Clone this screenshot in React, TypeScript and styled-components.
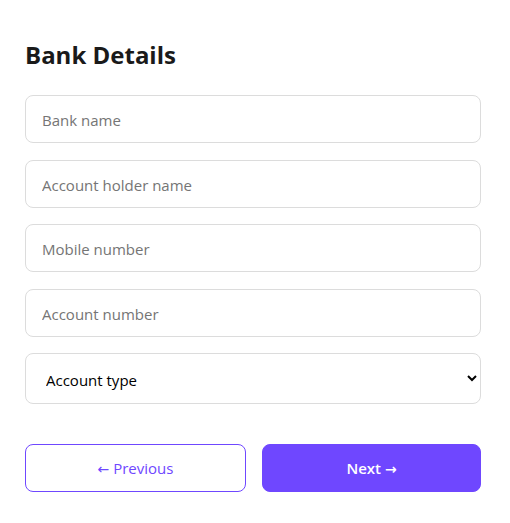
import React from 'react';
import styled, { createGlobalStyle } from 'styled-components';

const GlobalStyle = createGlobalStyle`
  body {
    margin: 0;
    background: #ffffff;
    font-family: "Open Sans", "Noto Sans", sans-serif;
  }
`;

const fields = ['Bank name', 'Account holder name', 'Mobile number', 'Account number'];

const App: React.FC = () => {
  return (
    <>
      <GlobalStyle />
      <Page>
        <Title>Bank Details</Title>
        <Form>
          {fields.map((label) => (
            <Input key={label} placeholder={label} />
          ))}
          <Select defaultValue="">
            <option value="">Account type</option>
            <option value="savings">Savings</option>
            <option value="current">Current</option>
          </Select>
        </Form>
        <Actions>
          <Button variant="outline">
            <Arrow>←</Arrow> Previous
          </Button>
          <Button variant="solid">
            Next <Arrow>→</Arrow>
          </Button>
        </Actions>
      </Page>
    </>
  );
};

export default App;

const Page = styled.div`
  width: 456px;
  padding: 38px 0 0 25px;
`;

const Title = styled.h2`
  margin: 0 0 23px 0;
  font-size: 24px;
  line-height: 34px;
  font-weight: 700;
  color: #1a1a1a;
`;

const Form = styled.div`
  display: flex;
  flex-direction: column;
  gap: 16.5px;
`;

const Input = styled.input`
  box-sizing: border-box;
  width: 100%;
  height: 48px;
  padding: 2px 16px 0 16px;
  border: 1px solid #dcdcdc;
  border-radius: 8px;
  font-family: "Open Sans", "Noto Sans", sans-serif;
  font-size: 15px;
  color: #1a1a1a;
  outline: none;

  &::placeholder {
    color: #757575;
  }
`;

const Select = styled.select`
  box-sizing: border-box;
  width: 100%;
  height: 51px;
  padding: 2px 16px 0 16px;
  border: 1px solid #dcdcdc;
  border-radius: 8px;
  background: #ffffff;
  font-family: "Open Sans", "Noto Sans", sans-serif;
  font-size: 15px;
  color: #000000;
  outline: none;
`;

const Actions = styled.div`
  display: grid;
  grid-template-columns: 221px 219px;
  gap: 16px;
  margin-top: 40px;
`;

const Arrow = styled.span`
  font-family: "DejaVu Sans", sans-serif;
  font-size: 14px;
`;

type ButtonProps = {
  variant: 'outline' | 'solid';
};
const Button = styled.button<ButtonProps>`
  height: 48px;
  border-radius: 8px;
  font-family: "Open Sans", "Noto Sans", sans-serif;
  font-size: 15px;
  cursor: pointer;
  border: 1px solid #6f47ff;
  background: ${(props) => (props.variant === 'solid' ? '#6f47ff' : '#ffffff')};
  color: ${(props) => (props.variant === 'solid' ? '#ffffff' : '#6f47ff')};
  font-weight: ${(props) => (props.variant === 'solid' ? 600 : 400)};
`;
